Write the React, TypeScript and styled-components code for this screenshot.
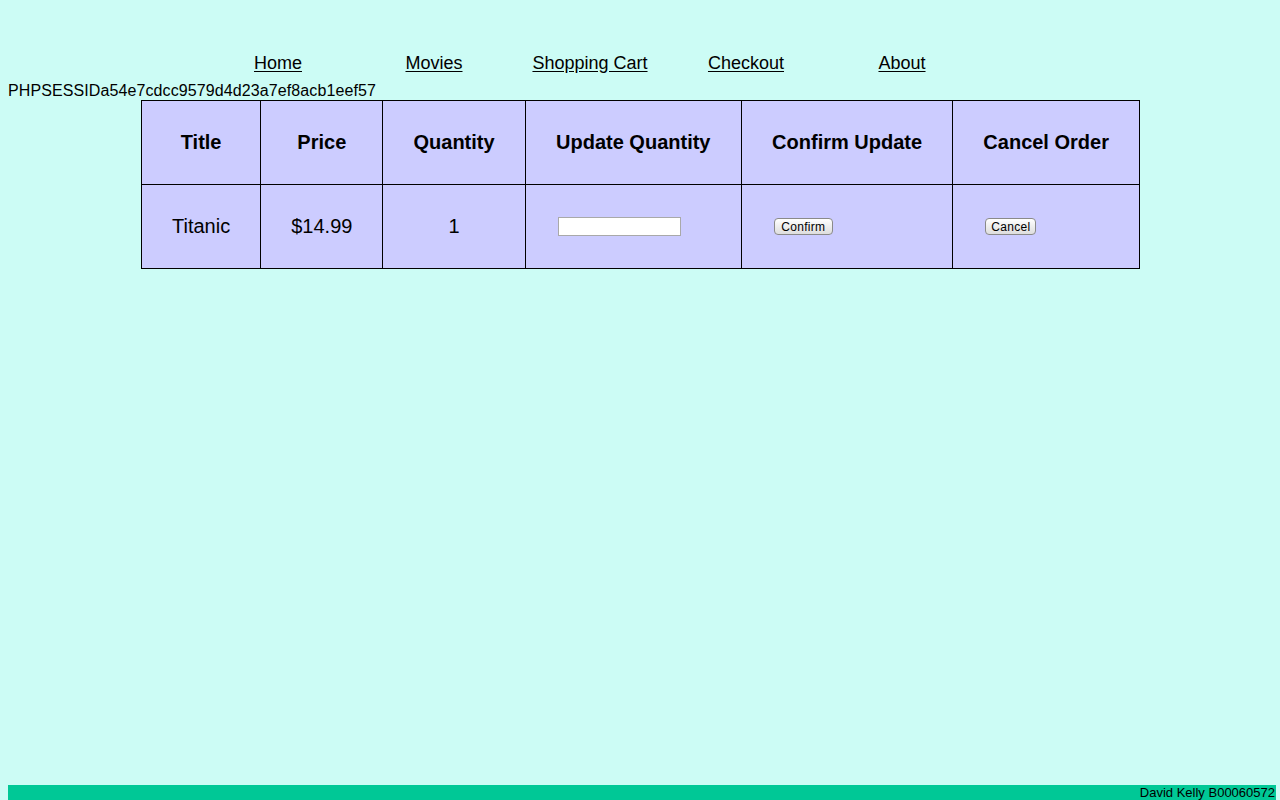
import React from "react";
import styled, { createGlobalStyle } from "styled-components";

const GlobalStyle = createGlobalStyle`
  html, body {
    margin: 0;
    padding: 0;
    background: #ccfcf5;
    font-family: "Liberation Sans", Arial, sans-serif;
    color: #000;
  }
`;

const Page = styled.div`
  min-height: 100vh;
  display: flex;
  flex-direction: column;
  padding: 0 4px 0 8px;
  box-sizing: border-box;
`;

const Nav = styled.nav`
  display: flex;
  margin: 52px 0 0 192px;
  height: 22px;
  align-items: center;
`;

const NavLink = styled.a`
  width: 156px;
  text-align: center;
  font-size: 18px;
  color: #000;
  text-decoration: underline;
  text-underline-offset: 2px;
`;

const Session = styled.div`
  font-size: 16px;
  letter-spacing: 0.1px;
  line-height: 18px;
  height: 18px;
  margin-top: 8px;
`;

const Table = styled.table`
  border-collapse: collapse;
  margin: 0 0 0 133px;
  width: 999px;
`;

const HeadCell = styled.th<{ $w: number }>`
  width: ${(p) => p.$w}px;
  height: 83px;
  border: 1px solid #000;
  background: #ccccff;
  font-size: 20px;
  font-weight: bold;
  text-align: center;
  padding: 0;
`;

const Cell = styled.td<{ $left?: boolean }>`
  height: 83px;
  border: 1px solid #000;
  background: #ccccff;
  font-size: 20px;
  text-align: ${(p) => (p.$left ? "left" : "center")};
  padding: ${(p) => (p.$left ? "0 0 0 32px" : "0")};
`;

const QtyInput = styled.input`
  width: 123px;
  height: 19px;
  box-sizing: border-box;
  border: 1px solid #a9a9a9;
  background: #fff;
  margin: 0 0 2px;
  padding: 1px 2px;
  vertical-align: middle;
`;

const Button = styled.button<{ $w: number }>`
  width: ${(p) => p.$w}px;
  height: 17px;
  box-sizing: border-box;
  font-family: "Liberation Sans", Arial, sans-serif;
  font-size: 12px;
  letter-spacing: 0.3px;
  line-height: 14px;
  padding: 0;
  margin: 0 0 2px;
  border: 1px solid #8a8a8a;
  border-radius: 4px;
  background: linear-gradient(#ffffff, #ececec 55%, #dedede);
  color: #000;
  vertical-align: middle;
`;

const Spacer = styled.div`
  flex: 1;
`;

const Footer = styled.footer`
  height: 15px;
  background: #00c896;
  font-size: 13px;
  line-height: 15px;
  text-align: right;
  padding-right: 1px;
`;

const cols = [
  { label: "Title", w: 119 },
  { label: "Price", w: 122 },
  { label: "Quantity", w: 142 },
  { label: "Update Quantity", w: 216 },
  { label: "Confirm Update", w: 212 },
  { label: "Cancel Order", w: 187 },
];

export default function App() {
  return (
    <>
      <GlobalStyle />
      <Page>
        <Nav>
          <NavLink href="#">Home</NavLink>
          <NavLink href="#">Movies</NavLink>
          <NavLink href="#">Shopping Cart</NavLink>
          <NavLink href="#">Checkout</NavLink>
          <NavLink href="#">About</NavLink>
        </Nav>
        <Session>PHPSESSIDa54e7cdcc9579d4d23a7ef8acb1eef57</Session>
        <Table>
          <thead>
            <tr>
              {cols.map((c) => (
                <HeadCell key={c.label} $w={c.w}>
                  {c.label}
                </HeadCell>
              ))}
            </tr>
          </thead>
          <tbody>
            <tr>
              <Cell>Titanic</Cell>
              <Cell>$14.99</Cell>
              <Cell>1</Cell>
              <Cell $left>
                <QtyInput type="text" />
              </Cell>
              <Cell $left>
                <Button $w={59}>Confirm</Button>
              </Cell>
              <Cell $left>
                <Button $w={51}>Cancel</Button>
              </Cell>
            </tr>
          </tbody>
        </Table>
        <Spacer />
        <Footer>David Kelly B00060572</Footer>
      </Page>
    </>
  );
}
